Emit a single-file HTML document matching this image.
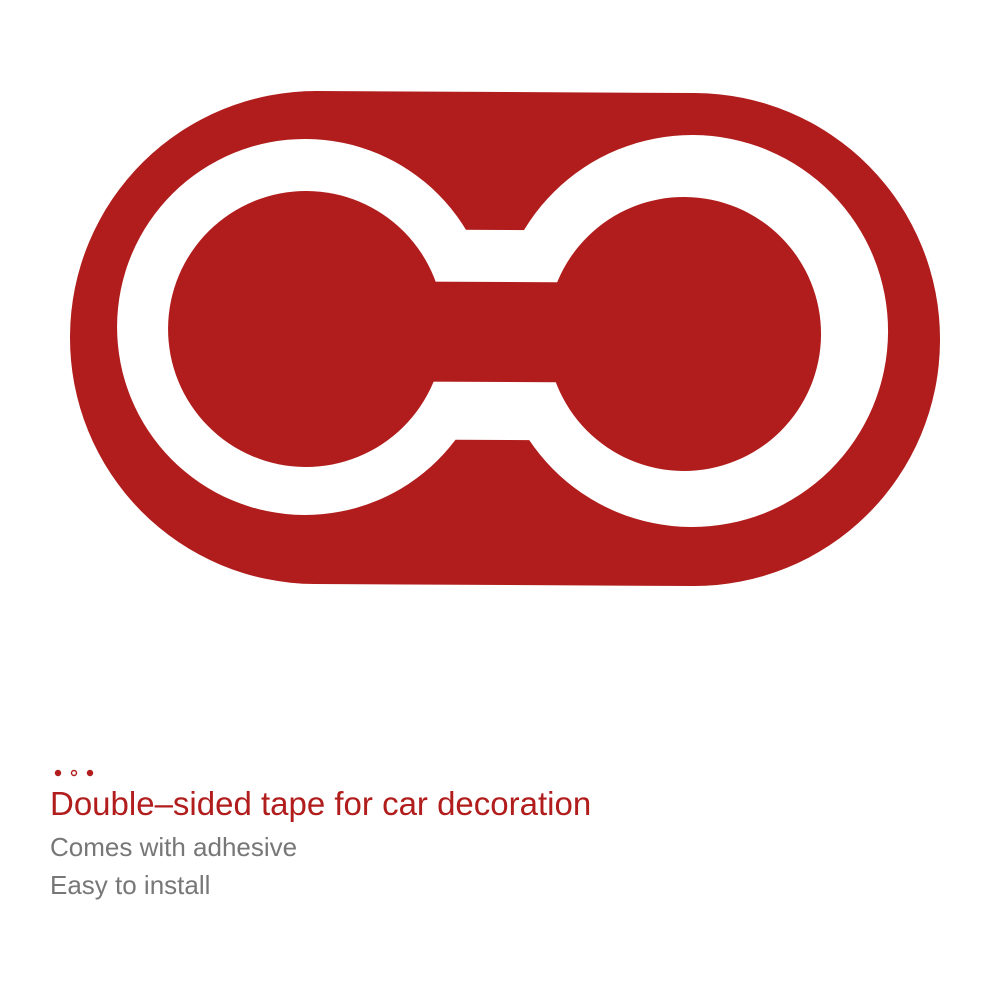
<!DOCTYPE html>
<html><head><style>
body{margin:0;width:1000px;height:1000px;background:#fff;overflow:hidden;position:relative;font-family:"Liberation Sans",sans-serif}
.t{position:absolute;left:50px;white-space:nowrap}
</style></head><body>
<svg width="1000" height="1000" style="position:absolute;left:0;top:0">
<g transform="rotate(0.3 500 340)">
<rect x="70" y="92" width="870" height="493" rx="246" fill="#b11d1c"/>
<g fill="#fff">
<circle cx="305" cy="328" r="188"/>
<circle cx="692" cy="330" r="196"/>
<rect x="380" y="230" width="240" height="210"/>
</g>
<g fill="#b11d1c">
<circle cx="306" cy="330" r="138"/>
<circle cx="684" cy="333" r="137"/>
<rect x="400" y="282" width="200" height="100"/>
</g>
</g>
</svg>
<svg width="60" height="12" style="position:absolute;left:52px;top:767px">
<circle cx="6" cy="6" r="3.2" fill="#b11d1c"/>
<circle cx="22" cy="6" r="2.5" fill="none" stroke="#b11d1c" stroke-width="1.4"/>
<circle cx="38" cy="6" r="3.2" fill="#b11d1c"/>
</svg>
<div class="t" style="top:785px;font-size:33px;color:#b11d1c">Double–sided tape for car decoration</div>
<div class="t" style="top:832px;font-size:26px;color:#777">Comes with adhesive</div>
<div class="t" style="top:870px;font-size:26px;color:#777">Easy to install</div>
</body></html>
